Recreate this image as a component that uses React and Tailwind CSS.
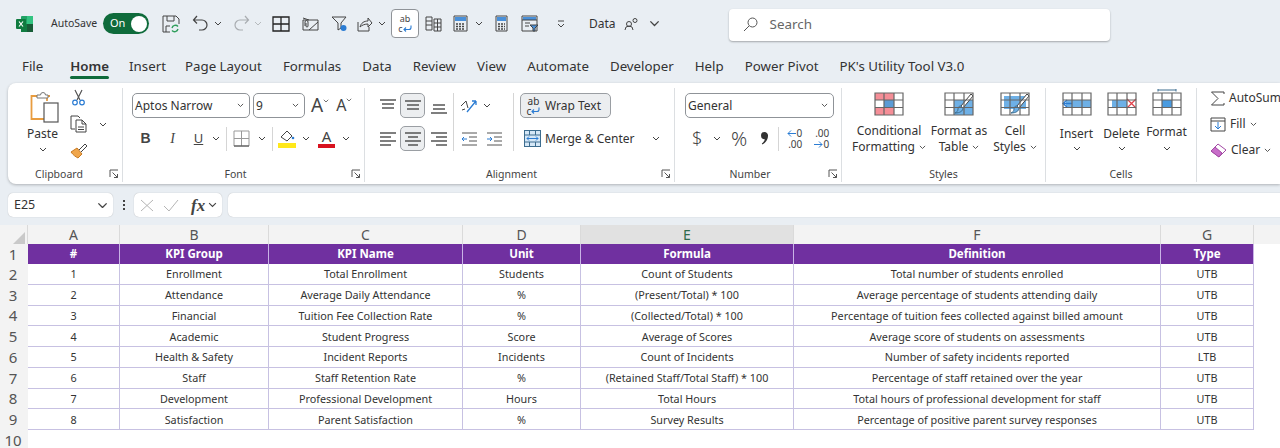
import React from 'react';

const UI = { fontFamily: '"Noto Sans", "Open Sans", sans-serif' };

const columnas = ['#', 'KPI Group', 'KPI Name', 'Unit', 'Formula', 'Definition', 'Type'];
const filas = [
  ['1', 'Enrollment', 'Total Enrollment', 'Students', 'Count of Students', 'Total number of students enrolled', 'UTB'],
  ['2', 'Attendance', 'Average Daily Attendance', '%', '(Present/Total) * 100', 'Average percentage of students attending daily', 'UTB'],
  ['3', 'Financial', 'Tuition Fee Collection Rate', '%', '(Collected/Total) * 100', 'Percentage of tuition fees collected against billed amount', 'UTB'],
  ['4', 'Academic', 'Student Progress', 'Score', 'Average of Scores', 'Average score of students on assessments', 'UTB'],
  ['5', 'Health & Safety', 'Incident Reports', 'Incidents', 'Count of Incidents', 'Number of safety incidents reported', 'LTB'],
  ['6', 'Staff', 'Staff Retention Rate', '%', '(Retained Staff/Total Staff) * 100', 'Percentage of staff retained over the year', 'UTB'],
  ['7', 'Development', 'Professional Development', 'Hours', 'Total Hours', 'Total hours of professional development for staff', 'UTB'],
  ['8', 'Satisfaction', 'Parent Satisfaction', '%', 'Survey Results', 'Percentage of positive parent survey responses', 'UTB'],
];
const tabs = ['Home', 'Insert', 'Page Layout', 'Formulas', 'Data', 'Review', 'View', 'Automate', 'Developer', 'Help', 'Power Pivot', "PK's Utility Tool V3.0"];

function Chev({ className = '', w = 8 }) {
  return (
    <svg width={w} height={w * 0.625} viewBox="0 0 8 5" className={`shrink-0 ${className}`} fill="none" stroke="#444" strokeWidth="1">
      <path d="M1 1l3 3 3-3" />
    </svg>
  );
}

function Launcher() {
  return (
    <svg width="10" height="10" viewBox="0 0 10 10" fill="none" stroke="#555" strokeWidth="1">
      <path d="M1 8V1h8" />
      <path d="M3.5 3.5L8.5 8.5M8.5 5v3.5H5" />
    </svg>
  );
}

function Ico({ w = 18, h = 18, children, className = '' }) {
  return (
    <svg width={w} height={h} viewBox={`0 0 ${w} ${h}`} fill="none" stroke="#444" strokeWidth="1" className={`shrink-0 ${className}`}>
      {children}
    </svg>
  );
}

function Lines({ tipo }) {
  const filasLinea = {
    top: [[1, 17, 3], [3, 15, 7], [3, 15, 11]],
    mid: [[1, 17, 4], [3, 15, 8], [3, 15, 12]],
    bot: [[3, 15, 8], [3, 15, 12], [1, 17, 16]],
    left: [[1, 17, 3], [1, 12, 7], [1, 17, 11], [1, 12, 15]],
    center: [[1, 17, 3], [4, 14, 7], [1, 17, 11], [4, 14, 15]],
    right: [[1, 17, 3], [6, 17, 7], [1, 17, 11], [6, 17, 15]],
  }[tipo];
  return (
    <Ico>
      {filasLinea.map(([a, b, y]) => (
        <path key={y} d={`M${a} ${y}H${b}`} stroke="#555" strokeWidth="1.3" />
      ))}
    </Ico>
  );
}

function Group({ w, label, launcher, pad = '', children }) {
  return (
    <div className="flex h-full shrink-0 flex-col border-r border-[#dcdfe2]" style={{ width: w }}>
      <div className="min-h-0 flex-1">{children}</div>
      <div className={`relative h-4 text-center text-[10.5px] leading-4 text-[#444] ${pad}`}>
        {label}
        {launcher && (
          <span className="absolute right-[3px] top-[3px] flex">
            <Launcher />
          </span>
        )}
      </div>
    </div>
  );
}

function WrapArrow() {
  return (
    <svg width="9" height="8" viewBox="0 0 9 8" fill="none" stroke="#2b7cd3" strokeWidth="1.100" className="shrink-0">
      <path d="M8 0.500v2a2 2 0 01-2 2H1M3 2.500l-2 2 2 2" />
    </svg>
  );
}

function TitleBar() {
  return (
    <div className="flex h-[47px] items-center text-[#333]">
      <svg width="18" height="18" viewBox="0 0 18 18" className="ml-4 shrink-0">
        <rect x="5" y="1" width="12" height="16" rx="1" fill="#21a366" />
        <rect x="11" y="1" width="6" height="8" fill="#33c481" />
        <rect x="5" y="9" width="6" height="8" fill="#107c41" />
        <rect x="11" y="9" width="6" height="8" fill="#185c37" />
        <rect x="0" y="4" width="10" height="10" rx="1" fill="#0f7b3f" />
        <path d="M3 6.500l4 5M7 6.500l-4 5" stroke="#fff" strokeWidth="1.200" />
      </svg>
      <span className="ml-[17px] w-[52px] text-[10.5px]">AutoSave</span>
      <div className="flex h-[21px] w-[46px] items-center justify-between rounded-full bg-[#0f6b3b] pl-[7px] pr-[2px] text-[11px] text-white">
        On
        <span className="h-[16px] w-[16px] rounded-full bg-white" />
      </div>
      <Ico w={18} h={18} className="ml-[13px]">
        <path d="M1 1h13l3 3v5M1 1v16h7M5 1v5h7V1M4 17v-6h4" />
        <path d="M10 13a3.500 3.500 0 016-1.500M16 14a3.500 3.500 0 01-6 1.500" stroke="#2f9e5b" strokeWidth="1.400" />
      </Ico>
      <Ico w={17} h={17} className="ml-[12px]">
        <path d="M5 1L1.500 5 5 8.500M2 5h8a5 5 0 010 10H7" strokeWidth="1.200" />
      </Ico>
      <Chev className="ml-[5px]" />
      <Ico w={17} h={17} className="ml-[11px]">
        <path d="M12 1l3.500 4L12 8.500M15 5H7a5 5 0 000 10h3" stroke="#a9adb1" strokeWidth="1.200" />
      </Ico>
      <Chev className="ml-[4px] opacity-30" />
      <Ico w={18} h={18} className="ml-[10px]">
        <path d="M1 2h16v14H1zM9 2v14M1 9h16" stroke="#222" strokeWidth="1.300" />
      </Ico>
      <Ico w={17} h={14} className="ml-[12px]">
        <path d="M1 3h15v10H1zM7 3L1 1M7 13l9-8" />
        <path d="M3 9V5a1.500 1.500 0 013 0v4a1 1 0 01-2 0V6" />
      </Ico>
      <Ico w={17} h={18} className="ml-[12px]">
        <path d="M1 2h14l-5 6v5l-3 2V8z" />
        <circle cx="12.500" cy="13" r="3" fill="#2b7cd3" stroke="none" />
      </Ico>
      <Ico w={17} h={16} className="ml-[8px]">
        <path d="M2 6v9h11v-4M4 11c1-4 4-6 8-6V2l4 5-4 4V8c-3 0-6 1-8 3z" />
      </Ico>
      <Chev className="ml-[5px]" />
      <div className="ml-[5px] flex h-[29px] w-[28px] flex-col items-center justify-center rounded-[4px] border border-[#8f9398] bg-white text-[9px] leading-[10px] text-[#444]">
        <span>ab</span>
        <span className="flex items-center">c<WrapArrow /></span>
      </div>
      <Ico w={17} h={17} className="ml-[6px]">
        <path d="M1 2h6v13H1zM1 6h6M1 10h6M9 4h7v12H9zM9 8h7M9 12h7M12.500 4v12" />
      </Ico>
      <Ico w={15} h={17} className="ml-[11px]">
        <path d="M1 1h13v15H1z" />
        <rect x="2" y="2" width="11" height="4" fill="#4a90d9" stroke="none" />
        <path d="M3 9h9M3 11.500h9M3 14h9" strokeDasharray="2 1" strokeWidth="1.500" />
      </Ico>
      <Chev className="ml-[7px]" />
      <Ico w={13} h={17} className="ml-[12px]">
        <path d="M1 1h11v15H1z" />
        <rect x="2" y="2" width="9" height="4" fill="#4a90d9" stroke="none" />
        <path d="M3 9h7M3 11.500h7M3 14h7" strokeDasharray="2 1" strokeWidth="1.500" />
      </Ico>
      <Ico w={18} h={17} className="ml-[13px]">
        <path d="M1 1h15v15H1z" />
        <rect x="2" y="2" width="13" height="3" fill="#4a90d9" stroke="none" />
        <path d="M1 5h15M4 8h5M4 11h4" />
        <path d="M9 10h8l-3 3v3h-2v-3z" fill="#4a90d9" stroke="#444" />
      </Ico>
      <svg width="8" height="8" viewBox="0 0 8 8" className="ml-[18px] shrink-0" fill="none" stroke="#444">
        <path d="M1 1h6M1 4l3 3 3-3" />
      </svg>
      <span className="ml-[24px] text-[12px]">Data</span>
      <Ico w={15} h={14} className="ml-[8px]">
        <circle cx="5" cy="7" r="2.500" />
        <circle cx="11" cy="3.500" r="2" />
        <path d="M1 13a4 4 0 018 0" />
      </Ico>
      <Chev className="ml-[10px]" w={11} />
      <div className="ml-[69px] mt-[2px] flex h-[32px] w-[381px] items-center rounded-[4px] bg-white pl-[14px] shadow-[0_1px_2px_rgba(0,0,0,0.3)]">
        <svg width="15" height="15" viewBox="0 0 15 15" fill="none" stroke="#555" strokeWidth="1">
          <circle cx="9.500" cy="5.500" r="4.500" />
          <path d="M6 9l-5 5" />
        </svg>
        <span className="ml-[12px] text-[13.400px] text-[#666]">Search</span>
      </div>
    </div>
  );
}

function Tabs() {
  return (
    <div className="flex h-[36px] items-center pl-[22px] pt-[3px] text-[13.300px] text-[#333]">
      <span className="mr-[27px]">File</span>
      <div className="flex gap-[21px]">
        {tabs.map((t, i) => (
          <span key={t} className={i === 0 ? 'relative -mr-px font-semibold' : i === 1 ? '-mr-[2px]' : ''}>
            {t}
            {i === 0 && <span className="absolute -bottom-[3px] left-0 h-[3px] w-full rounded-full bg-[#0f6b3b]" />}
          </span>
        ))}
      </div>
    </div>
  );
}

function Combo({ w, text }) {
  return (
    <div className="flex h-[25px] shrink-0 items-center justify-between rounded-[5px] border border-[#8f9398] bg-white pl-[2px] pr-[5px] text-[12px] text-[#333]" style={{ width: w }}>
      {text}
      <Chev w={7} />
    </div>
  );
}

function Clipboard() {
  return (
    <Group w={115} label="Clipboard" launcher pad="pr-[12px]">
      <div className="flex pl-[16px]">
        <div className="flex w-[37px] flex-col items-center pt-[3px]">
          <svg width="29" height="32" viewBox="0 0 29 32" fill="none" className="ml-[4px] shrink-0">
            <path d="M8 5H1.500v23H14" stroke="#e89c3f" strokeWidth="1.800" />
            <path d="M20 5h-3v5" stroke="#e89c3f" strokeWidth="1.800" />
            <path d="M7 7V4h3.500a2.500 2.500 0 015 0H18v3z" fill="#fff" stroke="#777" />
            <rect x="14" y="12" width="14" height="19" fill="#fff" stroke="#555" strokeWidth="1.200" />
          </svg>
          <span className="mt-[1px] text-[12px] leading-[20px] text-[#333]">Paste</span>
          <Chev className="mt-[3px]" />
        </div>
        <div className="ml-[9px] flex flex-col items-start">
          <svg width="17" height="17" viewBox="0 0 17 17" className="mt-[1px]" fill="none" strokeWidth="1.200">
            <path d="M5 1l5 10M12 1L7 11" stroke="#555" />
            <circle cx="5" cy="13.500" r="2.300" stroke="#2b7cd3" />
            <circle cx="12" cy="13.500" r="2.300" stroke="#2b7cd3" />
          </svg>
          <div className="mt-[9px] flex items-center">
            <Ico w={18} h={18}>
              <path d="M5 14H1V1h7l2 2M6 5h6l4 4v8H6zM12 5v4h4M8 12h6M8 14.500h6" />
            </Ico>
            <Chev className="ml-[11px]" />
          </div>
          <svg width="18" height="17" viewBox="0 0 18 17" className="mt-[9px]" fill="none">
            <path d="M1 10l6-4 5 6-4 4c-2-1-5-3-7-6z" fill="#f0a64b" stroke="#c77a22" />
            <path d="M9 8l6-6 2 2-6 6" stroke="#444" />
          </svg>
        </div>
      </div>
    </Group>
  );
}

function Font() {
  return (
    <Group w={242} label="Font" launcher pad="pr-[16px]">
      <div className="flex items-center pl-[9px] pt-[5px]">
        <Combo w={118} text="Aptos Narrow" />
        <div className="ml-[3px]"><Combo w={52} text="9" /></div>
        <span className="ml-[6px] flex items-start text-[19px] leading-[25px] text-[#444]">A<Chev className="mt-[6px]" w={6} /></span>
        <span className="ml-[7px] flex items-start text-[16px] leading-[25px] text-[#444]">A<Chev className="mt-[5px]" w={6} /></span>
      </div>
      <div className="mt-[8px] flex h-[25px] items-center pl-[16px] text-[#444]">
        <span className="w-[13px] text-center text-[14px] font-bold" style={{ fontFamily: '"Liberation Sans", sans-serif' }}>B</span>
        <span className="ml-[14px] w-[13px] text-center text-[14px] italic" style={{ fontFamily: '"Liberation Serif", serif' }}>I</span>
        <span className="ml-[13px] w-[13px] text-center text-[13px] underline">U</span>
        <Chev className="ml-[7px]" />
        <div className="ml-[6px] h-[24px] w-px bg-[#d5d5d5]" />
        <Ico w={17} h={17} className="ml-[6px]">
          <path d="M1 1h15v15H1zM8.500 1v15M1 8.500h15" stroke="#999" />
          <path d="M1 16h15" stroke="#444" />
        </Ico>
        <Chev className="ml-[8px]" />
        <div className="ml-[6px] h-[24px] w-px bg-[#d5d5d5]" />
        <svg width="18" height="19" viewBox="0 0 18 19" className="ml-[5px] shrink-0" fill="none">
          <path d="M3 8l6-6 5 5-5 5z" stroke="#444" />
          <circle cx="15" cy="9" r="1.300" fill="#2b7cd3" />
          <rect x="0" y="14" width="18" height="5" fill="#ffe81a" />
        </svg>
        <Chev className="ml-[6px]" />
        <div className="ml-[8px] flex w-[17px] flex-col items-center">
          <span className="text-[15px] leading-[15px]">A</span>
          <span className="h-[4px] w-full bg-[#d8121f]" />
        </div>
        <Chev className="ml-[7px]" />
      </div>
    </Group>
  );
}

function Align() {
  return (
    <Group w={310} label="Alignment" launcher pad="pr-[16px]">
      <div className="flex pl-[11px] pt-[5px]">
        <div className="grid grid-cols-[24px_25px_28px] gap-y-[8px]">
          <div className="flex h-[25px] items-center justify-center"><Lines tipo="top" /></div>
          <div className="flex h-[25px] items-center justify-center rounded-[5px] border border-[#9a9ea3] bg-[#eceef0]"><Lines tipo="mid" /></div>
          <div className="flex h-[25px] items-center justify-center"><Lines tipo="bot" /></div>
          <div className="flex h-[25px] items-center justify-center"><Lines tipo="left" /></div>
          <div className="flex h-[25px] items-center justify-center rounded-[5px] border border-[#9a9ea3] bg-[#eceef0]"><Lines tipo="center" /></div>
          <div className="flex h-[25px] items-center justify-center"><Lines tipo="right" /></div>
        </div>
        <div className="flex flex-col gap-[8px] border-l border-[#d5d5d5] pl-[6px]">
          <div className="flex h-[25px] items-center">
            <Ico w={18} h={16}>
              <path d="M7 14L16 3M16 3h-4M16 3v4" stroke="#2b7cd3" strokeWidth="1.300" />
              <path d="M1 8l5-5 2 7M2 12l3-1" strokeWidth="1" />
            </Ico>
            <Chev className="ml-[5px]" />
          </div>
          <div className="flex h-[25px] items-center gap-[9px] pl-[1px]">
            <Ico w={16} h={14}>
              <path d="M1 1h15M8 5h8M8 9h8M1 13h15" stroke="#555" />
              <path d="M6 7H1M3 5L1 7l2 2" stroke="#2b7cd3" />
            </Ico>
            <Ico w={16} h={14} className="ml-[1px]">
              <path d="M0 1h15M7 5h8M7 9h8M0 13h15" stroke="#555" />
              <path d="M0 7h5M3 5l2 2-2 2" stroke="#2b7cd3" />
            </Ico>
          </div>
        </div>
        <div className="ml-[10px] flex flex-col gap-[8px] border-l border-[#d5d5d5] pl-[6px]">
          <div className="flex h-[25px] w-[91px] items-center rounded-[5px] border border-[#9a9ea3] bg-[#eceef0] pl-[4px] text-[12px] text-[#333]">
            <span className="mr-[3px] flex w-[17px] flex-col items-center text-[10px] leading-[10px]">
              <span>ab</span>
              <span className="flex items-center">c<WrapArrow /></span>
            </span>
            Wrap Text
          </div>
          <div className="flex h-[25px] items-center text-[12px] text-[#333]">
            <svg width="17" height="17" viewBox="0 0 17 17" className="ml-[4px] mr-[4px] shrink-0" fill="none" stroke="#3d6d8f">
              <rect x="0.500" y="0.500" width="16" height="16" fill="#d6e8f7" />
              <path d="M0.500 5h16M0.500 12h16M5.500 0.500V5M11.500 0.500V5M5.500 12v4.500M11.500 12v4.500" />
              <path d="M3 8.500h11M5 6.500l-2 2 2 2M12 6.500l2 2-2 2" stroke="#2b7cd3" />
            </svg>
            Merge &amp; Center
            <Chev className="ml-[17px]" />
          </div>
        </div>
      </div>
    </Group>
  );
}

function NumberGroup() {
  return (
    <Group w={167} label="Number" launcher pad="pr-[16px]">
      <div className="pl-[10px] pt-[5px]">
        <Combo w={149} text="General" />
        <div className="mt-[8px] flex h-[25px] items-center text-[#444]">
          <span className="ml-[7px] w-[10px] text-center text-[18px] font-light">$</span>
          <Chev className="ml-[11px]" />
          <span className="ml-[10px] text-[20px] font-light">%</span>
          <svg width="8" height="13" viewBox="0 0 8 13" className="ml-[14px] shrink-0" fill="#333">
            <path d="M3.500 0a3.500 3.500 0 013.500 3.800c0 4-2.500 7.200-5.500 8.700l-.7-1c1.600-1.200 2.700-2.700 3-4.300A3.500 3.500 0 113.500 0z" />
          </svg>
          <div className="ml-[9px] h-[24px] w-px bg-[#d5d5d5]" />
          <span className="ml-[6px] flex w-[17px] flex-col items-end text-[10px] leading-[11px]">
            <span className="flex items-center">
              <svg width="9" height="7" viewBox="0 0 9 7" fill="none" stroke="#2b7cd3" className="mr-[1px]"><path d="M9 3.500H1M4 .5l-3 3 3 3" /></svg>
              0
            </span>
            <span>.00</span>
          </span>
          <span className="ml-[9px] flex w-[18px] flex-col items-end text-[10px] leading-[11px]">
            <span>.00</span>
            <span className="flex items-center">
              <svg width="9" height="7" viewBox="0 0 9 7" fill="none" stroke="#2b7cd3" className="mr-[1px]"><path d="M0 3.500h8M5 .5l3 3-3 3" /></svg>
              0
            </span>
          </span>
        </div>
      </div>
    </Group>
  );
}

function GridIcon({ children }) {
  return (
    <svg width="30" height="27" viewBox="0 0 30 27" fill="none" className="shrink-0">
      <g transform="translate(0 3)">
        {children}
        <path d="M1 1h28v22H1zM1 8h28M1 15.500h28M10 1v22M20 1v22" stroke="#666" strokeWidth="1.200" />
      </g>
    </svg>
  );
}

function Brush() {
  return (
    <g transform="translate(0 -3)">
      <path d="M29 7L19 19l-2-2L27 5z" fill="#fff" stroke="#444" />
      <path d="M17 17l2 2c0 3-3 5-8 5 2-1 3-2 3-4 0-2 1-3 3-3z" fill="#6eb0e6" stroke="#3d6d8f" />
    </g>
  );
}

function StyleBtn({ w, icono, l1, l2 }) {
  return (
    <div className="flex flex-col items-center text-[12px] leading-[16px] text-[#333]" style={{ width: w }}>
      <div className="h-[27px]">{icono}</div>
      <span className="mt-[7px] whitespace-nowrap">{l1}</span>
      <span className="flex items-center gap-[4px] whitespace-nowrap">{l2}<Chev w={7} /></span>
    </div>
  );
}

function Styles() {
  return (
    <Group w={204} label="Styles">
      <div className="flex pl-[8px] pt-[1px]">
        <StyleBtn
          w={78}
          l1="Conditional"
          l2="Formatting"
          icono={
            <GridIcon>
              <rect x="1" y="1" width="19" height="7" fill="#f58e97" />
              <rect x="10" y="8" width="10" height="7.500" fill="#5b9bd5" />
              <rect x="1" y="15.500" width="19" height="7.500" fill="#f58e97" />
            </GridIcon>
          }
        />
        <StyleBtn
          w={62}
          l1="Format as"
          l2="Table"
          icono={
            <GridIcon>
              <rect x="10" y="8" width="19" height="15" fill="#6eb0e6" />
              <Brush />
            </GridIcon>
          }
        />
        <StyleBtn
          w={50}
          l1="Cell"
          l2="Styles"
          icono={
            <GridIcon>
              <rect x="4" y="4" width="22" height="13" fill="#6eb0e6" />
              <Brush />
            </GridIcon>
          }
        />
      </div>
    </Group>
  );
}

function CellBtn({ icono, label, sube }) {
  return (
    <div className="flex w-[45px] flex-col items-center text-[12px] leading-[18px] text-[#333]">
      <div className="h-[27px]">{icono}</div>
      <span className={sube ? 'mt-[7px]' : 'mt-[9px]'}>{label}</span>
      <Chev className={sube ? 'mt-[5px]' : 'mt-[3px]'} />
    </div>
  );
}

function Cells() {
  return (
    <Group w={151} label="Cells">
      <div className="flex pl-[8px] pt-[1px]">
        <CellBtn
          label="Insert"
          icono={
            <GridIcon>
              <rect x="4" y="8" width="25" height="7.500" fill="#6eb0e6" />
              <path d="M10 11.500H1M5 8l-4 3.500L5 15" stroke="#2b7cd3" strokeWidth="1.300" />
            </GridIcon>
          }
        />
        <CellBtn
          label="Delete"
          icono={
            <GridIcon>
              <rect x="5" y="8" width="15" height="7.500" fill="#6eb0e6" />
              <path d="M20 7l9 9M29 7l-9 9" stroke="#e0414a" strokeWidth="1.300" />
            </GridIcon>
          }
        />
        <CellBtn
          label="Format"
          sube
          icono={
            <GridIcon>
              <rect x="10" y="8" width="10" height="7.500" fill="#4a9be0" />
              <path d="M6 -2h18M6 -3.500v3M24 -3.500v3" stroke="#3d6d8f" />
            </GridIcon>
          }
        />
      </div>
    </Group>
  );
}

function Editing() {
  return (
    <div className="flex h-full flex-col gap-[8px] whitespace-nowrap pl-[13px] pt-[1px] text-[12px] text-[#333]">
      <div className="flex h-[18px] items-center">
        <svg width="15" height="15" viewBox="0 0 15 15" className="mr-[4px] shrink-0" fill="none" stroke="#444">
          <path d="M14 3V1H1.500L8 7.500 1.500 14H14v-2" />
        </svg>
        AutoSum
      </div>
      <div className="flex h-[18px] items-center">
        <Ico w={16} h={15} className="mr-[4px]">
          <path d="M1 1h14v13H1zM1 4h14" />
          <path d="M8 5v7M5 9l3 3 3-3" stroke="#2b7cd3" />
        </Ico>
        Fill
        <Chev className="ml-[4px]" w={7} />
      </div>
      <div className="flex h-[18px] items-center">
        <svg width="17" height="15" viewBox="0 0 17 15" className="mr-[4px] shrink-0" fill="none">
          <path d="M1 8l7-7 8 6-7 7z" fill="#fff" stroke="#a349a4" />
          <path d="M1 8l4-4 7 6-3 4z" fill="#c86ec9" stroke="#a349a4" />
        </svg>
        Clear
        <Chev className="ml-[4px]" w={7} />
      </div>
    </div>
  );
}

function Ribbon() {
  return (
    <div className="ml-[8px] flex h-[101px] overflow-hidden rounded-l-[8px] bg-white pb-[2px] pt-[5px] shadow-[0_1px_3px_rgba(0,0,0,0.25)]" style={UI}>
      <Clipboard />
      <Font />
      <Align />
      <NumberGroup />
      <Styles />
      <Cells />
      <Editing />
    </div>
  );
}

function FormulaBar() {
  return (
    <div className="mt-[9px] flex h-[24px] items-stretch pl-[8px] text-[12.500px] text-[#333]">
      <div className="flex w-[105px] items-center justify-between rounded-[5px] bg-white pl-[6px] pr-[5px] shadow-[0_0_1px_rgba(0,0,0,0.3)]">
        E25
        <Chev w={11} />
      </div>
      <div className="flex w-[21px] flex-col items-center justify-center gap-[2px]">
        <span className="h-[2px] w-[2px] bg-[#444]" />
        <span className="h-[2px] w-[2px] bg-[#444]" />
        <span className="h-[2px] w-[2px] bg-[#444]" />
      </div>
      <div className="flex w-[88px] items-center rounded-[5px] bg-white pl-[6px] shadow-[0_0_1px_rgba(0,0,0,0.3)]">
        <svg width="14" height="13" viewBox="0 0 14 13" fill="none" stroke="#b5b5b5"><path d="M1 1l12 11M13 1L1 12" /></svg>
        <svg width="16" height="13" viewBox="0 0 16 13" className="ml-[9px]" fill="none" stroke="#b5b5b5"><path d="M1 7l5 5 9-11" /></svg>
        <span className="ml-[12px] text-[17px] font-bold italic leading-none text-[#444]" style={{ fontFamily: '"Liberation Serif", serif' }}>fx</span>
        <Chev className="ml-[3px]" w={9} />
      </div>
      <div className="ml-[6px] flex-1 rounded-l-[5px] bg-white shadow-[0_0_1px_rgba(0,0,0,0.3)]" />
    </div>
  );
}

function Sheet() {
  const plantilla = 'grid grid-cols-[28px_92px_149px_194px_118px_213px_367px_93px_1fr]';
  const letras = ['A', 'B', 'C', 'D', 'E', 'F', 'G'];
  const celda = 'flex items-center justify-center border-r border-b border-[#c7c1e2] pt-[1px] text-[#333]';
  const rowHead = 'flex items-center justify-center bg-[#f3f3f3] pr-[2px] text-[15px] leading-none text-[#555]';
  return (
    <div className="mt-[8px] bg-white">
      <div className={`${plantilla} h-[19px] bg-[#f3f3f3] text-[14px] leading-[19px] text-[#555]`}>
        <div className="flex items-end justify-end border-r border-[#dadada] p-[2px]">
          <span className="h-0 w-0 border-b-[12px] border-l-[12px] border-b-[#c9c9c9] border-l-transparent" />
        </div>
        {letras.map((l) => (
          <div key={l} className={l === 'E' ? 'border-b-2 border-r border-b-[#1d6f42] border-r-[#dadada] bg-[#e1e1e1] text-center text-[#2f6b4c]' : 'border-r border-[#dadada] text-center'}>
            {l}
          </div>
        ))}
        <div />
      </div>
      <div className={`${plantilla} grid-rows-[20px] auto-rows-[20.750px] text-[10.800px]`} style={{ fontFamily: '"Noto Sans", sans-serif' }}>
        <div className={rowHead}>1</div>
        {columnas.map((c) => (
          <div key={c} className="flex items-center justify-center border-r border-[#c9b3e6] bg-[#7030a0] text-[11.500px] font-bold text-white">
            {c}
          </div>
        ))}
        <div />
        {filas.map((f, i) => (
          <React.Fragment key={f[0]}>
            <div className={rowHead}>{i + 2}</div>
            {f.map((v, j) => (
              <div key={j} className={`${celda} whitespace-nowrap`}>{v}</div>
            ))}
            <div />
          </React.Fragment>
        ))}
        <div className={rowHead}>10</div>
      </div>
    </div>
  );
}

export default function App() {
  return (
    <div className="h-[448px] w-[1280px] overflow-hidden bg-[#e9eef3]" style={UI}>
      <TitleBar />
      <Tabs />
      <Ribbon />
      <FormulaBar />
      <Sheet />
    </div>
  );
}
